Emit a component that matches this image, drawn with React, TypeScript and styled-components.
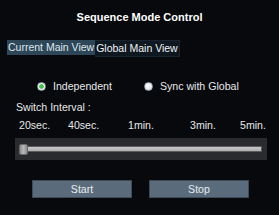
import { useState } from 'react';
import styled, { createGlobalStyle } from 'styled-components';

const GlobalStyle = createGlobalStyle`
  html, body {
    margin: 0;
    padding: 0;
    background: #08090c;
  }
  body {
    font-family: "Liberation Sans", Arial, sans-serif;
  }
`;

const Panel = styled.div`
  width: 279px;
  height: 215px;
  background: #08090c;
  color: #e6e8ea;
  font-size: 10.6px;
  box-sizing: border-box;
  padding-top: 10px;
  display: flex;
  flex-direction: column;
`;

const Title = styled.div`
  text-align: center;
  font-weight: 700;
  font-size: 11px;
  color: #ffffff;
  height: 14px;
  line-height: 14px;
`;

const Tabs = styled.div`
  display: flex;
  margin: 16px 0 0 7px;
`;

const Tab = styled.div<{ $active?: boolean }>`
  height: 15px;
  line-height: 15px;
  padding: 0 1px;
  font-size: 10.5px;
  background: ${({ $active }) => ($active ? '#2d4658' : '#0f1820')};
  color: ${({ $active }) => ($active ? '#dfe6ec' : '#f2f4f6')};
  border: ${({ $active }) => ($active ? 'none' : '1px solid #18252f')};
  border-left: none;
  box-sizing: content-box;
`;

const RadioRow = styled.div`
  display: flex;
  margin: 22px 0 0 37px;
  gap: 32px;
  height: 14px;
  align-items: center;
`;

const RadioItem = styled.label`
  display: flex;
  align-items: center;
  gap: 7px;
  cursor: pointer;
  color: #e6e8ea;
`;

const RadioDot = styled.span<{ $checked?: boolean }>`
  width: 9px;
  height: 9px;
  border-radius: 50%;
  box-sizing: border-box;
  background: ${({ $checked }) =>
    $checked
      ? 'radial-gradient(circle, #3ec24a 0 2px, #f4f6f8 2.5px)'
      : 'radial-gradient(circle at 40% 35%, #ffffff, #d6dbe0)'};
  border: 1px solid #9aa4ae;
`;

const SectionLabel = styled.div`
  margin: 7px 0 0 16px;
  height: 14px;
  line-height: 14px;
`;

const Ticks = styled.div`
  position: relative;
  height: 14px;
  margin-top: 4px;
`;

const Tick = styled.span`
  position: absolute;
  top: 0;
  line-height: 14px;
`;

const SliderBox = styled.div`
  margin: 6px 12px 0 15px;
  height: 22px;
  background: #2a2b2f;
  display: flex;
  align-items: center;
  padding: 0 5px;
  box-sizing: border-box;
  position: relative;
`;

const Track = styled.div`
  flex: 1;
  height: 6px;
  background: linear-gradient(#c9c9c9, #aeaeae);
  border: 1px solid #5c5c5c;
  box-sizing: border-box;
`;

const Thumb = styled.div`
  position: absolute;
  left: 4px;
  top: 6px;
  width: 9px;
  height: 11px;
  border-radius: 2px;
  background: linear-gradient(90deg, #8e8e8e, #b8b8b8 50%, #8a8a8a);
  border: 1px solid #6a6a6a;
  box-sizing: border-box;
`;

const Buttons = styled.div`
  display: flex;
  gap: 17px;
  margin: 20px 0 0 32px;
`;

const Button = styled.button`
  width: 100px;
  height: 18px;
  background: #5a6b7b;
  border: 1px solid #3e4a55;
  color: #e8ecef;
  font-family: "Liberation Sans", Arial, sans-serif;
  font-size: 10.6px;
  padding: 0;
  cursor: pointer;
`;

const ticks = [
  { label: '20sec.', x: 19 },
  { label: '40sec.', x: 68 },
  { label: '1min.', x: 128 },
  { label: '3min.', x: 190 },
  { label: '5min.', x: 240 },
];

export default function App() {
  const [tab, setTab] = useState(0);
  const [mode, setMode] = useState(0);

  return (
    <>
      <GlobalStyle />
      <Panel>
        <Title>Sequence Mode Control</Title>
        <Tabs>
          <Tab $active={tab === 0} onClick={() => setTab(0)}>
            Current Main View
          </Tab>
          <Tab $active={tab === 1} onClick={() => setTab(1)}>
            Global Main View
          </Tab>
        </Tabs>
        <RadioRow>
          <RadioItem onClick={() => setMode(0)}>
            <RadioDot $checked={mode === 0} />
            Independent
          </RadioItem>
          <RadioItem onClick={() => setMode(1)}>
            <RadioDot $checked={mode === 1} />
            Sync with Global
          </RadioItem>
        </RadioRow>
        <SectionLabel>Switch Interval :</SectionLabel>
        <Ticks>
          {ticks.map(t => (
            <Tick key={t.label} style={{ left: t.x }}>
              {t.label}
            </Tick>
          ))}
        </Ticks>
        <SliderBox>
          <Track />
          <Thumb />
        </SliderBox>
        <Buttons>
          <Button>Start</Button>
          <Button>Stop</Button>
        </Buttons>
      </Panel>
    </>
  );
}
